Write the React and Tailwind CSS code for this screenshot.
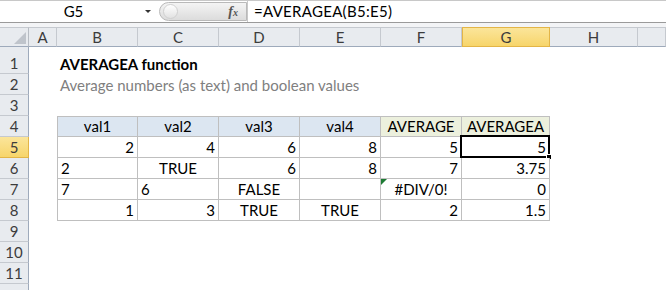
import React from "react";

const cols = ["A", "B", "C", "D", "E", "F", "G", "H", ""];

// table body, columns B..G, rows 4..8
const table = {
  4: [["val1", "c"], ["val2", "c"], ["val3", "c"], ["val4", "c"], ["AVERAGE", "c"], ["AVERAGEA", "c"]],
  5: [["2", "r"], ["4", "r"], ["6", "r"], ["8", "r"], ["5", "r"], ["5", "r"]],
  6: [["2", "l"], ["TRUE", "c"], ["6", "r"], ["8", "r"], ["7", "r"], ["3.75", "r"]],
  7: [["7", "l"], ["6", "l"], ["FALSE", "c"], ["", "l"], ["#DIV/0!", "c"], ["0", "r"]],
  8: [["1", "r"], ["3", "r"], ["TRUE", "c"], ["TRUE", "c"], ["2", "r"], ["1.5", "r"]],
};

const align = { l: "justify-start pl-[3px]", c: "justify-center", r: "justify-end pr-[3px]" };

function TableCell({ row, col }) {
  const [v, a] = table[row][col - 1];
  const head = row === 4;
  const bg = head ? (col >= 5 ? "bg-[#ecf0dd]" : "bg-[#dce6f1]") : "bg-white";
  return (
    <div
      className={`relative flex items-end pb-[1px] border-r border-b border-[#bfbfbf] ${bg} ${align[a]} ${
        col === 1 ? "border-l" : ""
      } ${head ? "border-t" : ""}`}
    >
      {v}
      {row === 7 && col === 5 && (
        <div className="absolute left-0 top-0 w-0 h-0 border-t-[6px] border-r-[6px] border-t-[#1e7b34] border-r-transparent" />
      )}
      {row === 5 && col === 6 && (
        <div className="absolute -left-[2px] -top-[2px] -right-[1px] -bottom-[1px] border-2 border-black">
          <div className="absolute -right-[4px] -bottom-[4px] w-[6px] h-[6px] bg-black border border-white" />
        </div>
      )}
    </div>
  );
}

function Cell({ row, col }) {
  if (row >= 4 && row <= 8 && col >= 1 && col <= 6) return <TableCell row={row} col={col} />;
  if (row === 1 && col === 1)
    return <div className="flex items-end pb-[1px] pl-[3px] font-bold whitespace-nowrap overflow-visible z-10">AVERAGEA function</div>;
  if (row === 2 && col === 1)
    return <div className="flex items-end pb-[1px] pl-[3px] text-[#808080] whitespace-nowrap overflow-visible z-10">Average numbers (as text) and boolean values</div>;
  return <div className="bg-white" />;
}

export default function App() {
  const rows = [1, 2, 3, 4, 5, 6, 7, 8, 9, 10, 11, 12];
  return (
    <div className="w-[666px] h-[290px] overflow-hidden bg-white font-['Lato',sans-serif] text-[15px] text-black">
      {/* formula bar */}
      <div className="h-[23px] flex border-t border-[#c8c8c8] border-b border-b-[#9a9a9a] bg-white">
        <div className="w-[145px] flex items-center justify-center pl-[2px] text-[15px]">G5</div>
        <div className="w-[14px] flex items-center justify-start">
          <div className="w-0 h-0 border-l-[3px] border-r-[3px] border-t-[3px] border-l-transparent border-r-transparent border-t-[#333]" />
        </div>
        <div className="w-[88px] my-[1px] flex items-center justify-between rounded-l-full border border-[#b9b9b9] bg-gradient-to-b from-[#f4f4f4] to-[#dcdcdc] pl-[3px] pr-[8px]">
          <div className="w-[15px] h-[15px] rounded-full bg-gradient-to-b from-[#ffffff] to-[#e2e2e2] border border-[#d0d0d0]" />
          <span className="font-['Liberation_Serif',serif] italic font-bold text-[#555] text-[14px] leading-none">
            f<span className="text-[10px]">x</span>
          </span>
        </div>
        <div className="flex-1 flex items-center pl-[6px] border-l border-[#c8c8c8] tracking-[0.3px]">=AVERAGEA(B5:E5)</div>
      </div>
      <div className="h-[4px] bg-[#f3f4f6]" />

      {/* sheet */}
      <div className="grid grid-cols-[29px_28px_81px_81px_81px_81px_81px_88px_88px_1fr] grid-rows-[20px_27px_repeat(11,21px)] leading-[18px]">
        {/* column headers */}
        <div className="relative bg-[#e8ebef] border-t border-[#c5c9cf] border-b border-b-[#9eaabb] border-r border-r-[#b7bcc3]">
          <svg className="absolute left-[14px] top-[4px]" width="12" height="12" viewBox="0 0 12 12">
            <polygon points="12,0 12,12 0,12" fill="#bfc4cb" />
          </svg>
        </div>
        {cols.map((c, i) => (
          <div
            key={c + i}
            className={`flex items-center justify-center text-[#3c3c3c] border-t border-b border-r ${
              c === "G"
                ? "bg-gradient-to-b from-[#fbe59a] to-[#f7d56a] border-[#e3b547] border-l border-l-[#e3b547]"
                : "bg-[#e8ebef] border-[#c5c9cf] border-b-[#9eaabb]"
            }`}
          >
            {c}
          </div>
        ))}

        {rows.map((r) => (
          <React.Fragment key={r}>
            <div
              className={`flex items-end justify-center pb-[1px] text-[#3c3c3c] border-b border-r ${
                r === 5
                  ? "bg-gradient-to-b from-[#fbe59a] to-[#f7d56a] border-[#e3b547]"
                  : "bg-[#e8ebef] border-[#c5c9cf] border-r-[#9eaabb]"
              }`}
            >
              {r < 12 ? r : ""}
            </div>
            {cols.map((c, i) => (
              <Cell key={r + "-" + i} row={r} col={i} />
            ))}
          </React.Fragment>
        ))}
      </div>
    </div>
  );
}
